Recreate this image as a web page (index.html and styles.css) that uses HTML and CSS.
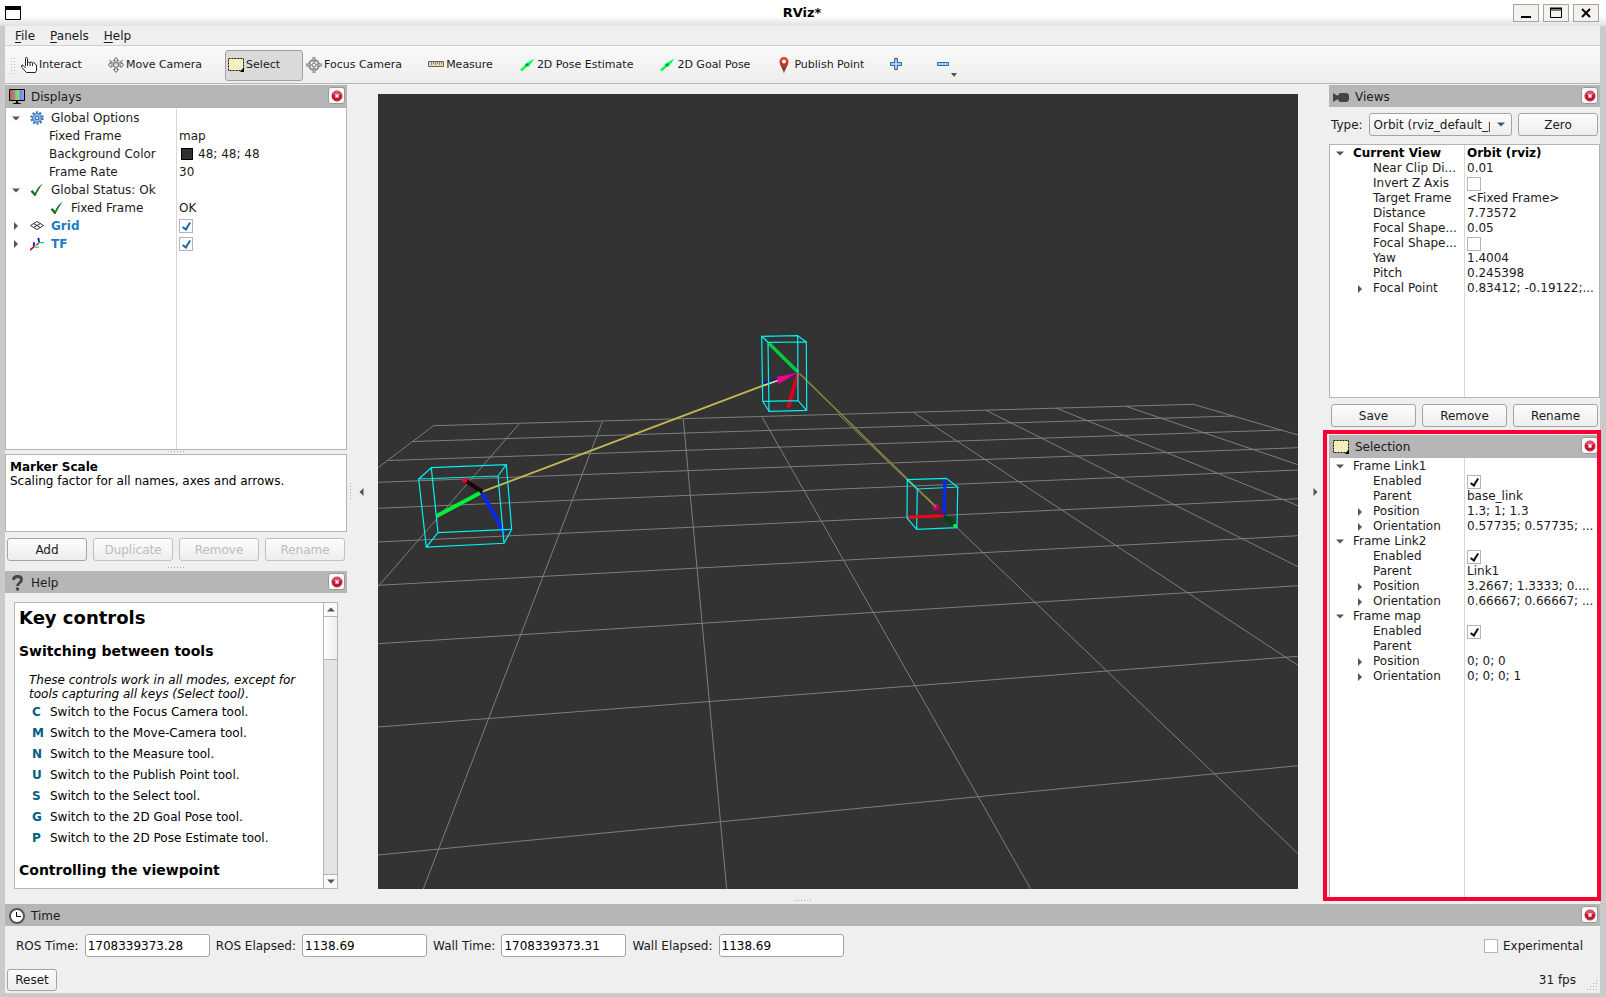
FILE: index.html
```html
<!DOCTYPE html>
<html lang="en">
<head>
	<meta charset="UTF-8">
	<title>RViz*</title>
	<link rel="stylesheet" href="styles.css">
</head>
<body>
	<!-- shared icons -->
	<svg class="defs" width="0" height="0" aria-hidden="true">
		<defs>
			<linearGradient id="screen" x1="0" x2="1" y1="0" y2="0">
				<stop offset="0" stop-color="#b85a64"/>
				<stop offset=".33" stop-color="#c8787c"/>
				<stop offset=".34" stop-color="#6cc07c"/>
				<stop offset=".66" stop-color="#90e098"/>
				<stop offset=".67" stop-color="#7c7cd8"/>
				<stop offset="1" stop-color="#a0a0f4"/>
			</linearGradient>
			<linearGradient id="pinfill" x1="0" x2="0" y1="0" y2="1">
				<stop offset="0" stop-color="#e8402c"/>
				<stop offset=".5" stop-color="#b83828"/>
				<stop offset="1" stop-color="#504030"/>
			</linearGradient>
			<symbol id="i-close" viewBox="0 0 12 12">
				<circle cx="6" cy="6" r="5" fill="#d0102c" stroke="#a83044" stroke-width="1"/>
				<path d="M2 5a4 4 0 0 1 8 0z" fill="#e05068"/>
				<path d="M4.500 4.500l3 3M7.500 4.500l-3 3" stroke="#fff" stroke-width="1.500"/>
			</symbol>
			<symbol id="i-check" viewBox="0 0 14 14">
				<path d="M.5 8.500L2.500 7l2.500 3C7 5.500 9.500 2.500 13 .5 10 4 7.500 8.500 5.500 13H4.500z" fill="#12742a"/>
			</symbol>
			<symbol id="i-select" viewBox="0 0 16 14">
				<path d="M.5 .5h15v12H.5z" fill="#f6eebc" stroke="#111" stroke-dasharray="2 1"/>
				<path d="M16 9v5h-4z" fill="#000"/>
			</symbol>
			<symbol id="i-pose" viewBox="0 0 16 14">
				<path d="M2 12.500L8 7" stroke="#00ff4c" stroke-width="2.500"/>
				<path d="M5 6.500L15.500 .5 9.500 9 8 7z" fill="#00ff4c"/>
				<path d="M7 8l2-2" stroke="#0c8c38" stroke-width="2"/>
			</symbol>
			<symbol id="i-down" viewBox="0 0 8 5">
				<path d="M0 .5h8L4 4.500z" fill="#555"/>
			</symbol>
			<symbol id="i-right" viewBox="0 0 5 8">
				<path d="M.5 0v8L4.500 4z" fill="#555"/>
			</symbol>
		</defs>
	</svg>

	<div class="window">
		<header class="titlebar">
			<svg class="appicon" width="16" height="14" viewBox="0 0 16 14"><path d="M.5 .5h15v13H.5z" fill="#fff" stroke="#000"/><path d="M0 0h16v4H0z"/></svg>
			<h1>RViz*</h1>
			<div class="winbtns">
				<button aria-label="Minimize"><svg width="12" height="12"><path d="M1 9h10v2H1z"/></svg></button>
				<button aria-label="Maximize"><svg width="12" height="12"><path d="M.5 1.500h11v9H.5zM0 1h12v2H0z" fill="none" stroke="#000"/></svg></button>
				<button aria-label="Close window"><svg width="12" height="12"><path d="M2 2l8 8M10 2l-8 8" stroke="#000" stroke-width="2"/></svg></button>
			</div>
		</header>

		<div class="frame">
			<nav class="menubar">
				<button><u>F</u>ile</button>
				<button><u>P</u>anels</button>
				<button><u>H</u>elp</button>
			</nav>

			<div class="toolbar">
				<span class="grip"></span>
				<button class="tool">
					<svg width="16" height="16" viewBox="0 0 16 16"><path d="M4.500 9V1.500q0-1 1-1t1 1V6q0-1 1-1t1.500 1q0-1 1-1t1.500 1.500q0-1 1-1T14 7l1.500 1v5.500l-1 2h-9L1 10.500q-1-2 0-2.500t3.500 3" fill="#fff" stroke="#222"/><path d="M6.500 6v3M9 6v3M11.500 6.500V9" stroke="#222"/></svg>
					Interact
				</button>
				<button class="tool">
					<svg width="16" height="16" viewBox="0 0 16 16"><path d="M8 .5l2.500 3H9v3.500h4V4.500L15.500 8 13 10.500V9H9v3.500h1.500L8 15.500l-2.500-3H7V9H3v1.500L.5 8 3 4.500V7h4V3.500H5.500z" fill="#eee" stroke="#666"/><path d="M1 3l5 3M15 3l-5 3" stroke="#888"/><circle cx="8" cy="8" r="2.500" fill="#ddd" stroke="#777"/></svg>
					Move Camera
				</button>
				<button class="tool active">
					<svg width="16" height="14"><use href="#i-select"/></svg>
					Select
				</button>
				<button class="tool">
					<svg width="16" height="16" viewBox="0 0 16 16"><circle cx="8" cy="8" r="5" fill="none" stroke="#888" stroke-width="2"/><circle cx="8" cy="8" r="2" fill="#eee" stroke="#777"/><path d="M7 0h2v5H7zM7 11h2v5H7zM0 7h5v2H0zM11 7h5v2h-5z" fill="#ccc" stroke="#777" stroke-width=".8"/></svg>
					Focus Camera
				</button>
				<button class="tool">
					<svg width="16" height="16" viewBox="0 0 16 16"><path d="M.5 4.500h15v5H.5z" fill="#e4daaa" stroke="#6c6650"/><path d="M3.500 5v3M5.500 5v2M7.500 5v3M9.500 5v2M11.500 5v3M13.500 5v2" stroke="#888"/></svg>
					Measure
				</button>
				<button class="tool">
					<svg width="16" height="14"><use href="#i-pose"/></svg>
					2D Pose Estimate
				</button>
				<button class="tool">
					<svg width="16" height="14"><use href="#i-pose"/></svg>
					2D Goal Pose
				</button>
				<button class="tool">
					<svg width="16" height="18" viewBox="0 0 16 18"><path d="M8 17.500C7 13 3.500 9.500 3.500 5.500a4.500 4.500 0 0 1 9 0C12.500 9.500 9 13 8 17.500z" fill="url(#pinfill)"/><circle cx="8" cy="5.500" r="2" fill="#fff"/></svg>
					Publish Point
				</button>
				<button class="tool plus" aria-label="Add tool">
					<svg width="12" height="12"><path d="M4.500 .5h3v4h4v3h-4v4h-3v-4h-4v-3h4z" fill="#a8cce8" stroke="#2c68a4"/></svg>
				</button>
				<button class="tool minus" aria-label="Remove tool">
					<svg width="12" height="12"><path d="M.5 4.500h11v3H.5z" fill="#a8cce8" stroke="#2c68a4"/></svg>
					<svg class="more" width="6" height="4"><path d="M0 0h6L3 4z" fill="#555"/></svg>
				</button>
			</div>

			<main class="content">
				<aside class="leftdock">
					<section class="displays">
						<div class="ptitle">
							<svg width="16" height="16" viewBox="0 0 16 16"><path d="M.5 .5h15v11H.5z" fill="url(#screen)" stroke="#000"/><path d="M7 12h2v2H7z"/><path d="M3 15q5-3 10 0z"/></svg>
							<h2>Displays</h2>
							<button class="close" aria-label="Close Displays"><svg width="12" height="12"><use href="#i-close"/></svg></button>
						</div>
						<div class="treebox">
							<table class="tree">
								<tr>
									<td><div class="lv0"><svg class="arr" width="8" height="5"><use href="#i-down"/></svg><svg class="ico" width="14" height="14" viewBox="0 0 14 14"><circle cx="7" cy="7" r="5.500" fill="none" stroke="#3c78b4" stroke-width="2.500" stroke-dasharray="2 1.450"/><circle cx="7" cy="7" r="4.500" fill="#8cb8e0" stroke="#4480bc"/><path d="M5.500 5.500h3v3h-3z" fill="#cfe2f4" stroke="#3c78b4"/></svg>Global Options</div></td>
									<td></td>
								</tr>
								<tr><td><div class="leaf">Fixed Frame</div></td><td>map</td></tr>
								<tr><td><div class="leaf">Background Color</div></td><td><span class="swatch"></span>48; 48; 48</td></tr>
								<tr><td><div class="leaf">Frame Rate</div></td><td>30</td></tr>
								<tr>
									<td><div class="lv0"><svg class="arr" width="8" height="5"><use href="#i-down"/></svg><svg class="ico" width="14" height="14"><use href="#i-check"/></svg>Global Status: Ok</div></td>
									<td></td>
								</tr>
								<tr>
									<td><div class="sub"><svg class="ico" width="14" height="14"><use href="#i-check"/></svg>Fixed Frame</div></td>
									<td>OK</td>
								</tr>
								<tr>
									<td><div class="lv0 on"><svg class="arr" width="8" height="8"><use href="#i-right"/></svg><svg class="ico" width="14" height="14" viewBox="0 0 14 14"><path d="M.5 6.500L7 2.500l6.500 4L7 10.500zM3.500 4.500l7 4M10.500 4.500l-7 4" fill="none" stroke="#333"/></svg><label for="grid">Grid</label></div></td>
									<td><input class="blue" type="checkbox" id="grid" checked></td>
								</tr>
								<tr>
									<td><div class="lv0 on"><svg class="arr" width="8" height="8"><use href="#i-right"/></svg><svg class="ico" width="16" height="14" viewBox="0 0 16 14"><path d="M9.500 0l1 5" stroke="#0010e0" stroke-width="2"/><path d="M10 5.500h6M5 10.500h5" stroke="#00e040" stroke-width="1.500"/><path d="M4.500 5v5" stroke="#0010e0" stroke-width="2"/><path d="M10 6L7 8.500" stroke="#e00020" stroke-width="1.500"/><path d="M7.500 8L5 10" stroke="#e0c020"/><path d="M4.500 10L0 14" stroke="#e00020" stroke-width="2"/></svg><label for="tf">TF</label></div></td>
									<td><input class="blue" type="checkbox" id="tf" checked></td>
								</tr>
							</table>
						</div>
						<span class="hdots"></span>
						<div class="desc">
							<b>Marker Scale</b>
							<p>Scaling factor for all names, axes and arrows.</p>
						</div>
						<div class="btnrow">
							<button class="btn">Add</button>
							<button class="btn" disabled>Duplicate</button>
							<button class="btn" disabled>Remove</button>
							<button class="btn" disabled>Rename</button>
						</div>
						<span class="hdots last"></span>
					</section>

					<section class="help">
						<div class="ptitle">
							<svg width="16" height="16" viewBox="0 0 16 16"><path d="M4.500 5q0-3.500 4-3.500t4 3q0 2-2 3.500T8.500 11" fill="none" stroke="#444" stroke-width="2.800"/><circle cx="8.500" cy="14" r="1.700" fill="#444"/></svg>
							<h2>Help</h2>
							<button class="close" aria-label="Close Help"><svg width="12" height="12"><use href="#i-close"/></svg></button>
						</div>
						<div class="browser">
							<div class="doc">
								<h3>Key controls</h3>
								<h4>Switching between tools</h4>
								<p><i>These controls work in all modes, except for tools capturing all keys (Select tool).</i></p>
								<table class="keys">
									<tr><th>C</th><td>Switch to the Focus Camera tool.</td></tr>
									<tr><th>M</th><td>Switch to the Move-Camera tool.</td></tr>
									<tr><th>N</th><td>Switch to the Measure tool.</td></tr>
									<tr><th>U</th><td>Switch to the Publish Point tool.</td></tr>
									<tr><th>S</th><td>Switch to the Select tool.</td></tr>
									<tr><th>G</th><td>Switch to the 2D Goal Pose tool.</td></tr>
									<tr><th>P</th><td>Switch to the 2D Pose Estimate tool.</td></tr>
								</table>
								<h4>Controlling the viewpoint</h4>
							</div>
							<div class="scroll">
								<button aria-label="Scroll up"><svg width="8" height="5"><path d="M0 4.500h8L4 .5z" fill="#555"/></svg></button>
								<div class="thumb"></div>
								<button class="end" aria-label="Scroll down"><svg width="8" height="5"><use href="#i-down"/></svg></button>
							</div>
						</div>
					</section>
				</aside>

				<div class="gutter">
					<span class="vdots"></span>
					<button aria-label="Hide left dock"><svg width="5" height="8"><path d="M4.500 0v8L.5 4z" fill="#555"/></svg></button>
				</div>

				<div class="view3d">
					<svg class="scene" viewBox="378 94 920 795" preserveAspectRatio="xMidYMid slice">
						<!-- ground grid -->
						<g stroke="#7e7e7e" stroke-width="1">
							<path d="M433.500 425.700L1193.300 404.300M413 441.500L1233.500 416M388.500 460.500L1281.700 430M378 482.300L1298 447.700M378 508.300L1298 470M378 542L1298 498.700M378 585.300L1298 535.700M378 643.700L1298 585.700M378 727L1298 656.300M378 855L1298 765.700"/>
							<path d="M433.500 425.700L378 467.700M519.300 423.700L378 586.700M602.300 421.700L423.300 889M683.300 419.300L726.700 889M762.300 417.300L1030.700 889M839 415L1298 853.700M913.300 412.300L1298 665.300M986 410.300L1298 566.700M1056.700 408.300L1298 505.700M1126 406.300L1298 464.700M1193.300 404.300L1298 435"/>
						</g>
						<!-- Link2 -->
						<g fill="none" stroke-width="4">
							<path d="M482.300 491.700L778 380" stroke="#c0b850" stroke-width="1.900"/>
							<path d="M482.300 491.700L464.700 480.300" stroke="#200404"/>
							<path d="M480 493L436.700 516" stroke="#00f03c"/>
							<path d="M482.300 492.700L504.300 533.300" stroke="#0a28e8"/>
						</g>
						<circle cx="464.700" cy="480.300" r="2.500" fill="#ff0020"/>
						<path d="M418.700 479L498 476 504 543.300 426.300 547zM431.300 467.700L506.300 464.700 511.700 529.300 438 532.700zM418.700 479l12.600-11.300M498 476l8.300-11.300M504 543.300l7.700-14M426.300 547l11.700-14.300" class="cyan"/>
						<!-- Link1 -->
						<path d="M799 373L935.700 506.700" stroke="#908838" stroke-width="1.500"/>
						<path d="M763.500 383.500L797 373" stroke="#0c1ca0" stroke-width="2.500"/>
						<path d="M763.500 385.500L779 380" stroke="#dcd484" stroke-width="1.500"/>
						<path d="M798 372.500L776.500 377l2 7z" fill="#f0008c"/>
						<path d="M769 343.500L798 372" stroke="#06c83c" stroke-width="3.500"/>
						<path d="M798 373L788 408" stroke="#d8001c" stroke-width="4"/>
						<path d="M761.700 336.300L797.700 335.700 798 400.700 762.700 401.300zM768 342.300L806.300 342 806.700 410.300 769 411.300zM761.700 336.300l6.300 6M797.700 335.700l8.600 6.300M798 400.700l8.700 9.600M762.700 401.300l6.300 10" class="cyan"/>
						<!-- map -->
						<path d="M907.300 479.700L946.300 478.300 957.700 487 917.300 489zM917.300 489L916.700 529.300 957 527.700 957.700 487M907.300 479.700L907 518 916.700 529.300M907 518l37-2" class="cyan"/>
						<path d="M945 480L944 515" stroke="#0a28e8" stroke-width="3.500"/>
						<path d="M908 517.300L943.500 515.700" stroke="#f80018" stroke-width="3"/>
						<path d="M944 516L955 525.700" stroke="#004414" stroke-width="4"/>
						<circle cx="955" cy="525.700" r="2" fill="#10f040"/>
						<path d="M935.500 507L943 515" stroke="#800c50" stroke-width="3"/>
						<circle cx="935.700" cy="507" r="3.300" fill="#c0006c"/>
						<path d="M925 496L936 507" stroke="#908838" stroke-width="1.500"/>
					</svg>
					<span class="hdots bottom"></span>
				</div>

				<div class="gutter right">
					<button aria-label="Hide right dock"><svg width="5" height="8"><use href="#i-right"/></svg></button>
				</div>

				<aside class="rightdock">
					<section class="views">
						<div class="ptitle">
							<svg width="16" height="16" viewBox="0 0 16 16"><path d="M0 4l5 3V6l2-2h7l2 2v5l-2 2H7l-2-2v-1l-5 3z" fill="#444"/></svg>
							<h2>Views</h2>
							<button class="close" aria-label="Close Views"><svg width="12" height="12"><use href="#i-close"/></svg></button>
						</div>
						<div class="typerow">
							<label for="vtype">Type:</label>
							<div class="combo">
								<select id="vtype"><option>Orbit (rviz_default_plugins)</option></select>
								<svg width="8" height="5"><use href="#i-down"/></svg>
							</div>
							<button class="btn">Zero</button>
						</div>
						<div class="treebox">
							<table class="tree small">
								<tr class="bold"><td><div class="lv0"><svg class="arr" width="8" height="5"><use href="#i-down"/></svg>Current View</div></td><td>Orbit (rviz)</td></tr>
								<tr><td><div class="leaf">Near Clip Di...</div></td><td>0.01</td></tr>
								<tr><td><div class="leaf"><label for="invz">Invert Z Axis</label></div></td><td><input type="checkbox" id="invz"></td></tr>
								<tr><td><div class="leaf">Target Frame</div></td><td>&lt;Fixed Frame&gt;</td></tr>
								<tr><td><div class="leaf">Distance</div></td><td>7.73572</td></tr>
								<tr><td><div class="leaf">Focal Shape...</div></td><td>0.05</td></tr>
								<tr><td><div class="leaf"><label for="fsfix">Focal Shape...</label></div></td><td><input type="checkbox" id="fsfix"></td></tr>
								<tr><td><div class="leaf">Yaw</div></td><td>1.4004</td></tr>
								<tr><td><div class="leaf">Pitch</div></td><td>0.245398</td></tr>
								<tr><td><div class="branch"><svg class="arr" width="8" height="8"><use href="#i-right"/></svg>Focal Point</div></td><td>0.83412; -0.19122;...</td></tr>
							</table>
						</div>
						<div class="btnrow">
							<button class="btn">Save</button>
							<button class="btn">Remove</button>
							<button class="btn">Rename</button>
						</div>
					</section>

					<section class="selection">
						<div class="ptitle">
							<svg width="16" height="14"><use href="#i-select"/></svg>
							<h2>Selection</h2>
							<button class="close" aria-label="Close Selection"><svg width="12" height="12"><use href="#i-close"/></svg></button>
						</div>
						<div class="treebox">
							<table class="tree small">
								<tr><td><div class="lv0"><svg class="arr" width="8" height="5"><use href="#i-down"/></svg>Frame Link1</div></td><td></td></tr>
								<tr><td><div class="leaf"><label for="en1">Enabled</label></div></td><td><input type="checkbox" id="en1" checked></td></tr>
								<tr><td><div class="leaf">Parent</div></td><td>base_link</td></tr>
								<tr><td><div class="branch"><svg class="arr" width="8" height="8"><use href="#i-right"/></svg>Position</div></td><td>1.3; 1; 1.3</td></tr>
								<tr><td><div class="branch"><svg class="arr" width="8" height="8"><use href="#i-right"/></svg>Orientation</div></td><td>0.57735; 0.57735; ...</td></tr>
								<tr><td><div class="lv0"><svg class="arr" width="8" height="5"><use href="#i-down"/></svg>Frame Link2</div></td><td></td></tr>
								<tr><td><div class="leaf"><label for="en2">Enabled</label></div></td><td><input type="checkbox" id="en2" checked></td></tr>
								<tr><td><div class="leaf">Parent</div></td><td>Link1</td></tr>
								<tr><td><div class="branch"><svg class="arr" width="8" height="8"><use href="#i-right"/></svg>Position</div></td><td>3.2667; 1.3333; 0....</td></tr>
								<tr><td><div class="branch"><svg class="arr" width="8" height="8"><use href="#i-right"/></svg>Orientation</div></td><td>0.66667; 0.66667; ...</td></tr>
								<tr><td><div class="lv0"><svg class="arr" width="8" height="5"><use href="#i-down"/></svg>Frame map</div></td><td></td></tr>
								<tr><td><div class="leaf"><label for="en3">Enabled</label></div></td><td><input type="checkbox" id="en3" checked></td></tr>
								<tr><td><div class="leaf">Parent</div></td><td></td></tr>
								<tr><td><div class="branch"><svg class="arr" width="8" height="8"><use href="#i-right"/></svg>Position</div></td><td>0; 0; 0</td></tr>
								<tr><td><div class="branch"><svg class="arr" width="8" height="8"><use href="#i-right"/></svg>Orientation</div></td><td>0; 0; 0; 1</td></tr>
							</table>
						</div>
						<div class="redbox"></div>
					</section>
				</aside>
			</main>

			<footer class="time">
				<div class="ptitle">
					<svg width="16" height="16" viewBox="0 0 16 16"><circle cx="8" cy="8" r="7" fill="#fff" stroke="#555" stroke-width="2"/><path d="M7.500 4v4.500H12" fill="none" stroke="#000"/></svg>
					<h2>Time</h2>
					<button class="close" aria-label="Close Time"><svg width="12" height="12"><use href="#i-close"/></svg></button>
				</div>
				<div class="fields">
					<label for="rt">ROS Time:</label><input type="text" id="rt" value="1708339373.28">
					<label for="re">ROS Elapsed:</label><input type="text" id="re" value="1138.69">
					<label for="wt">Wall Time:</label><input type="text" id="wt" value="1708339373.31">
					<label for="we">Wall Elapsed:</label><input type="text" id="we" value="1138.69">
					<span class="exp"><input type="checkbox" id="exp"><label for="exp">Experimental</label></span>
				</div>
				<div class="bottomrow">
					<button class="btn">Reset</button>
					<span class="fps">31 fps</span>
					<svg width="11" height="11" viewBox="0 0 11 11" fill="#b0b0b0"><path d="M9 0h1v1H9zM9 3h1v1H9zM6 3h1v1H6zM9 6h1v1H9zM6 6h1v1H6zM3 6h1v1H3zM9 9h1v1H9zM6 9h1v1H6zM3 9h1v1H3zM0 9h1v1H0z"/></svg>
				</div>
			</footer>
		</div>
	</div>
</body>
</html>
```

FILE: styles.css
```css
* {
	box-sizing: border-box;
}
body {
	margin: 0;
	font-family: "DejaVu Sans", sans-serif;
	font-size: 12px;
	line-height: 14px;
	color: #1a1a1a;
}
h1, h2, h3, h4, p {
	margin: 0;
}
button, input, select {
	margin: 0;
	padding: 0;
	font: inherit;
	color: inherit;
}
button {
	border: 0;
	background: none;
}
svg {
	display: block;
	flex: none;
}
.defs {
	position: absolute;
}
.window {
	display: flex;
	flex-direction: column;
	height: 100vh;
	background: #efefef;
}

/* title bar */
.titlebar {
	display: grid;
	grid-template-columns: 1fr auto 1fr;
	align-items: center;
	height: 26px;
	padding: 0 7px 0 5px;
	background: linear-gradient(#fff 60%, #e0e0e0);
}
.titlebar h1 {
	font-size: 13px;
	line-height: 16px;
	color: #000;
}
.winbtns {
	display: flex;
	justify-content: flex-end;
	gap: 4px;
}
.winbtns button {
	display: flex;
	align-items: center;
	justify-content: center;
	width: 26px;
	height: 18px;
	border: 1px solid #a8a49c;
	background: #f4f2ee;
}

.frame {
	display: flex;
	flex-direction: column;
	flex: 1;
	min-height: 0;
	border: solid #cacaca;
	border-width: 0 6px 4px 5px;
}
.menubar {
	display: flex;
	gap: 1px;
	height: 20px;
	padding: 0 3px;
	border-bottom: 1px solid #d0d0d0;
}
.menubar button {
	padding: 0 7px;
}
.menubar u {
	text-underline-offset: 2px;
}

/* tools */
.toolbar {
	display: flex;
	align-items: center;
	height: 38px;
	padding: 1px 0 0 5px;
	border-bottom: 1px solid #b4b4b4;
	background: linear-gradient(#f9f9f9, #eee);
	font-size: 11px;
}
.grip {
	width: 8px;
	height: 17px;
	background: radial-gradient(circle, #bbb 1px, transparent 1px) 0 0 / 3px 3px;
	background-clip: content-box;
	padding-right: 3px;
}
.tool {
	display: flex;
	align-items: center;
	gap: 2px;
	height: 31px;
	padding: 0 22px 0 2px;
	border: 1px solid transparent;
	border-radius: 3px;
	white-space: nowrap;
}
.tool.active {
	border-color: #a0a0a0;
	background: #dadada;
}
.tool.plus {
	width: 47px;
	padding: 0 0 2px 2px;
}
.tool.minus {
	position: relative;
	padding: 0 10px 2px 2px;
}
.more {
	position: absolute;
	right: 2px;
	bottom: 3px;
}

.content {
	display: flex;
	flex: 1;
	min-height: 0;
	padding-top: 1px;
}
.leftdock, .rightdock {
	display: flex;
	flex-direction: column;
	flex: none;
}
.leftdock {
	width: 342px;
}
.rightdock {
	width: 271px;
}
.leftdock section, .rightdock section {
	display: flex;
	flex-direction: column;
	min-height: 0;
}
.displays {
	flex: 486 1 0;
}
.help {
	flex: 333 1 0;
}
.views {
	flex: 350 1 0;
}
.rightdock .selection {
	position: relative;
	flex: 464 1 0;
	padding-bottom: 5px;
}

.ptitle {
	display: flex;
	align-items: center;
	flex: none;
	gap: 6px;
	height: 22px;
	padding: 1px 2px 0 4px;
	background: #b6b6b6;
}
.ptitle h2 {
	flex: 1;
	font-size: 12px;
	font-weight: normal;
	line-height: 14px;
}
.close {
	display: flex;
	align-items: center;
	justify-content: center;
	width: 17px;
	height: 17px;
	margin-bottom: 2px;
	border: 1px solid #999;
	border-radius: 3px;
	background: #fafafa;
}

/* property trees */
.treebox {
	flex: 1;
	min-height: 0;
	padding-top: 1px;
	overflow: hidden;
	border: 1px solid #b4b4b4;
	background: #fff;
}
.leftdock .treebox {
	background: linear-gradient(#d8d8d8, #d8d8d8) 170px 0 / 1px 100% no-repeat #fff;
}
.rightdock .treebox {
	background: linear-gradient(#d8d8d8, #d8d8d8) 134px 0 / 1px 100% no-repeat #fff;
}
.tree {
	width: 100%;
	table-layout: fixed;
	border-collapse: collapse;
}
.tree td {
	height: 18px;
	padding: 0 2px;
	overflow: hidden;
	white-space: nowrap;
	text-overflow: ellipsis;
	line-height: 15px;
}
.tree td:first-child {
	width: 171px;
	padding: 0;
}
.small td {
	height: 15px;
}
.small td:first-child {
	width: 135px;
}
.tree td > div {
	display: flex;
	align-items: center;
}
.arr {
	margin-right: 10px;
}
.ico {
	width: 14px;
	margin-right: 7px;
}
.tree .lv0 {
	padding-left: 6px;
}
.tree .leaf {
	padding-left: 43px;
}
.tree .sub {
	padding-left: 44px;
}
.on {
	font-weight: bold;
	color: #1e7cc0;
}
.small .branch {
	padding-left: 26px;
}
.small .arr {
	margin-right: 9px;
}
.bold {
	font-weight: bold;
	color: #000;
}
.swatch {
	display: inline-block;
	width: 12px;
	height: 12px;
	margin: 0 5px 0 2px;
	border: 1px solid #000;
	background: #303030;
	vertical-align: -2px;
}
input[type="checkbox"] {
	display: block;
	flex: none;
	appearance: none;
	width: 14px;
	height: 14px;
	border: 1px solid #b4b4b4;
	background: #fff;
}
input[type="checkbox"]:checked::before {
	content: "";
	display: block;
	box-sizing: border-box;
	width: 5px;
	height: 9px;
	margin: 1px 0 0 4px;
	border: solid #111;
	border-width: 0 2px 2px 0;
	transform: rotate(32deg);
}
input.blue:checked::before {
	border-color: #1a6ca4;
}

.hdots {
	flex: none;
	align-self: center;
	width: 17px;
	height: 1px;
	margin: 1px 0 2px;
	background: repeating-linear-gradient(90deg, #aaa 0 1px, transparent 1px 3px);
}
.hdots.last {
	margin: 6px 0 3px;
}
.vdots {
	width: 1px;
	height: 17px;
	background: repeating-linear-gradient(#aaa 0 1px, transparent 1px 3px);
}
.desc {
	flex: none;
	height: 78px;
	padding: 5px 4px;
	border: 1px solid #b4b4b4;
	background: #fff;
	color: #000;
}
.desc b, .desc p {
	display: block;
	line-height: 14px;
}
.btnrow {
	display: flex;
	flex: none;
	gap: 6px;
	padding: 6px 2px 0;
}
.views .btnrow {
	padding-bottom: 8px;
}
.btn {
	height: 23px;
	border: 1px solid #a4a4a4;
	border-radius: 3px;
	background: linear-gradient(#fdfdfd, #ededed);
}
.btnrow .btn {
	flex: 1 1 0;
}
.btn:disabled {
	border-color: #c0c0c0;
	color: #bcbcbc;
}

/* help text */
.browser {
	display: flex;
	flex: 1;
	min-height: 0;
	margin: 9px 9px 15px;
	border: 1px solid #b4b4b4;
	background: #fff;
	color: #000;
}
.doc {
	flex: 1;
	padding: 4px;
	overflow: hidden;
}
.doc h3 {
	margin-bottom: 15px;
	font-size: 18px;
	line-height: 21px;
}
.doc h4 {
	font-size: 14px;
	line-height: 16px;
}
.doc p {
	margin: 14px 0 0 10px;
}
.keys {
	margin: 0 0 14px 13px;
	border-collapse: collapse;
}
.keys th, .keys td {
	height: 21px;
	padding: 0;
	text-align: left;
}
.keys th {
	width: 18px;
	color: #006080;
}
.scroll {
	display: flex;
	flex-direction: column;
	width: 14px;
	border-left: 1px solid #b4b4b4;
	background: #e4e4e4;
}
.scroll button {
	display: flex;
	align-items: center;
	justify-content: center;
	height: 14px;
	border-bottom: 1px solid #b4b4b4;
	background: #fafafa;
}
.scroll .end {
	margin-top: auto;
	border-top: 1px solid #b4b4b4;
	border-bottom: 0;
}
.thumb {
	height: 43px;
	border-bottom: 1px solid #b4b4b4;
	background: linear-gradient(90deg, #fff, #eee);
}

/* render area */
.gutter {
	display: flex;
	align-items: center;
	gap: 8px;
	width: 31px;
	padding: 9px 0 15px 3px;
}
.gutter.right {
	padding-left: 15px;
}
.view3d {
	display: flex;
	flex-direction: column;
	flex: 1;
	min-width: 0;
	padding-top: 9px;
}
.scene {
	flex: 1;
	width: 100%;
	min-height: 0;
	background: #333;
}
.cyan {
	fill: none;
	stroke: #00f0f0;
	stroke-width: 1.2;
}
/* the dots sit mid-window, the left dock is wider than the right one */
.hdots.bottom {
	margin: 11px 70px 3px 0;
}

.typerow {
	display: flex;
	align-items: center;
	flex: none;
	gap: 6px;
	padding: 6px 2px 8px;
}
.combo {
	position: relative;
	flex: 1;
	min-width: 0;
}
.combo select {
	display: block;
	appearance: none;
	width: 100%;
	height: 23px;
	padding: 0 21px 0 4px;
	border: 1px solid #a4a4a4;
	border-radius: 3px;
	background: linear-gradient(#fdfdfd, #ededed);
}
.combo svg {
	position: absolute;
	top: 9px;
	right: 7px;
	pointer-events: none;
}
.typerow .btn {
	width: 80px;
}
.redbox {
	position: absolute;
	top: -5px;
	right: -1px;
	bottom: 3px;
	left: -6px;
	border: 4px solid #f80030;
	pointer-events: none;
}

/* time panel */
.time {
	flex: none;
}
.fields {
	display: flex;
	align-items: center;
	gap: 6px;
	padding: 8px 17px 12px 11px;
}
.fields input[type="text"] {
	width: 125px;
	height: 23px;
	padding: 0 2px;
	border: 1px solid #a4a4a4;
	border-radius: 3px;
	background: #fff;
	color: #000;
}
.exp {
	display: flex;
	align-items: center;
	gap: 5px;
	margin-left: auto;
}
.bottomrow {
	display: flex;
	align-items: center;
	gap: 11px;
	padding: 0 2px 2px;
}
.bottomrow .btn {
	width: 50px;
	height: 22px;
}
.fps {
	margin-left: auto;
}
.bottomrow svg {
	align-self: flex-end;
}
```
